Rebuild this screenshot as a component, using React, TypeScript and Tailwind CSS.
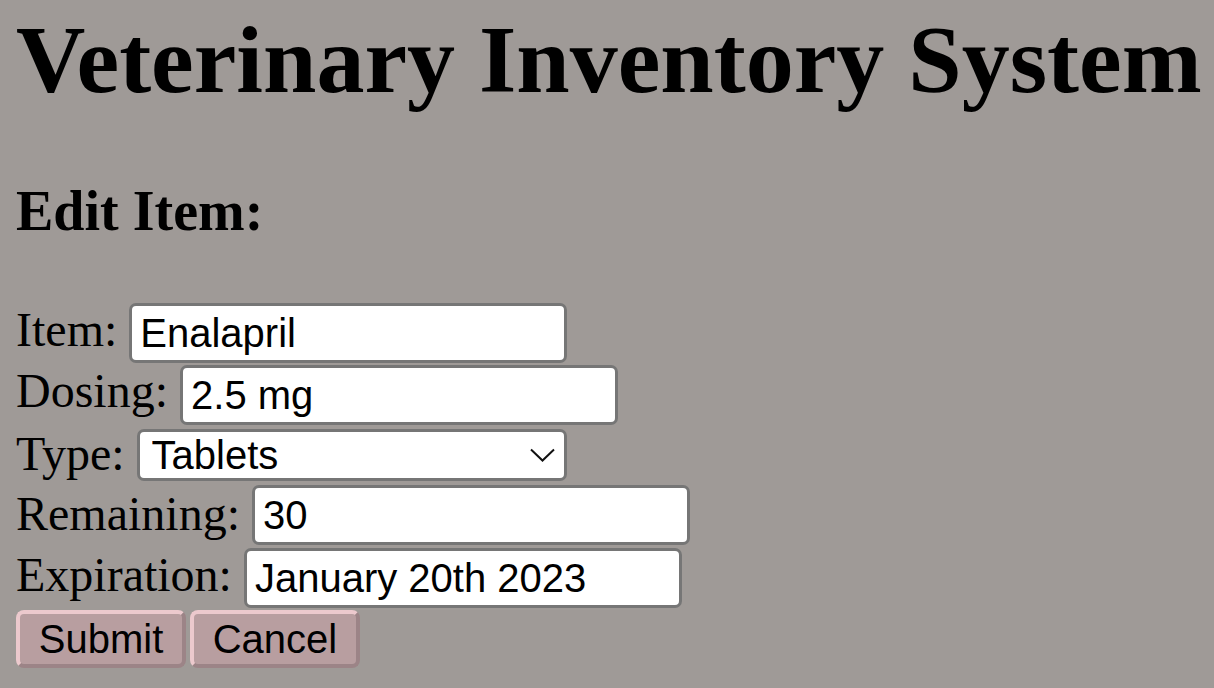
import React from 'react';

const field = "h-[60px] w-[438px] rounded-[7px] border-[3px] border-[#767676] bg-white px-[8px] text-[40px] text-black outline-none font-['Liberation_Sans',Arial,sans-serif]";
const label = "text-[48px] leading-none text-black";
const btn = "h-[58px] w-[170px] rounded-[8px] border-[4px] border-t-[#ecc9cd] border-l-[#ecc9cd] border-b-[#9c8487] border-r-[#9c8487] bg-[#b89ea0] text-[40px] leading-none text-black font-['Liberation_Sans',Arial,sans-serif]";

export default function App() {
    return (
        <div className="min-h-[688px] w-full bg-[#9f9a97] px-4 pt-[7px] font-['Liberation_Serif','Times_New_Roman',serif] text-black">
            <h1 className="m-0 text-[96px] font-bold leading-[106px] whitespace-nowrap">Veterinary Inventory System</h1>
            <h3 className="mt-[67px] text-[56px] font-bold leading-[62px]">Edit Item:</h3>

            <form className="mt-[59px] flex flex-col" onSubmit={(e) => e.preventDefault()}>
                <div className="flex h-[63px] items-center gap-3">
                    <span className={`${label} mb-[5px]`}>Item:</span>
                    <input className={field} defaultValue="Enalapril" />
                </div>
                <div className="flex h-[62px] items-center gap-3">
                    <span className={`${label} mb-[8px]`}>Dosing:</span>
                    <input className={field} defaultValue="2.5 mg" />
                </div>
                <div className="flex h-[58px] items-center gap-3">
                    <span className={`${label} mb-[2px]`}>Type:</span>
                    <div className="relative">
                        <select className="h-[52px] w-[430px] appearance-none rounded-[7px] border-[3px] border-[#767676] bg-white pl-[12px] text-[40px] leading-none text-black outline-none font-['Liberation_Sans',Arial,sans-serif]" defaultValue="Tablets">
                            <option>Tablets</option>
                            <option>Capsules</option>
                            <option>Liquid</option>
                            <option>Injectable</option>
                        </select>
                        <svg className="pointer-events-none absolute right-[12px] top-[19px]" width="25" height="14" viewBox="0 0 25 14" fill="none">
                            <path d="M1 1.5 L12.5 12.5 L24 1.5" stroke="#111" strokeWidth="2" />
                        </svg>
                    </div>
                </div>
                <div className="flex h-[61px] items-center gap-3">
                    <span className={`${label} mb-[2px]`}>Remaining:</span>
                    <input className={field} defaultValue="30" />
                </div>
                <div className="flex h-[65px] items-center gap-3">
                    <span className={`${label} mb-[6px]`}>Expiration:</span>
                    <input className={field} defaultValue="January 20th 2023" />
                </div>
                <div className="flex gap-1">
                    <button type="submit" className={btn}>Submit</button>
                    <button type="button" className={btn}>Cancel</button>
                </div>
            </form>
        </div>
    );
}
